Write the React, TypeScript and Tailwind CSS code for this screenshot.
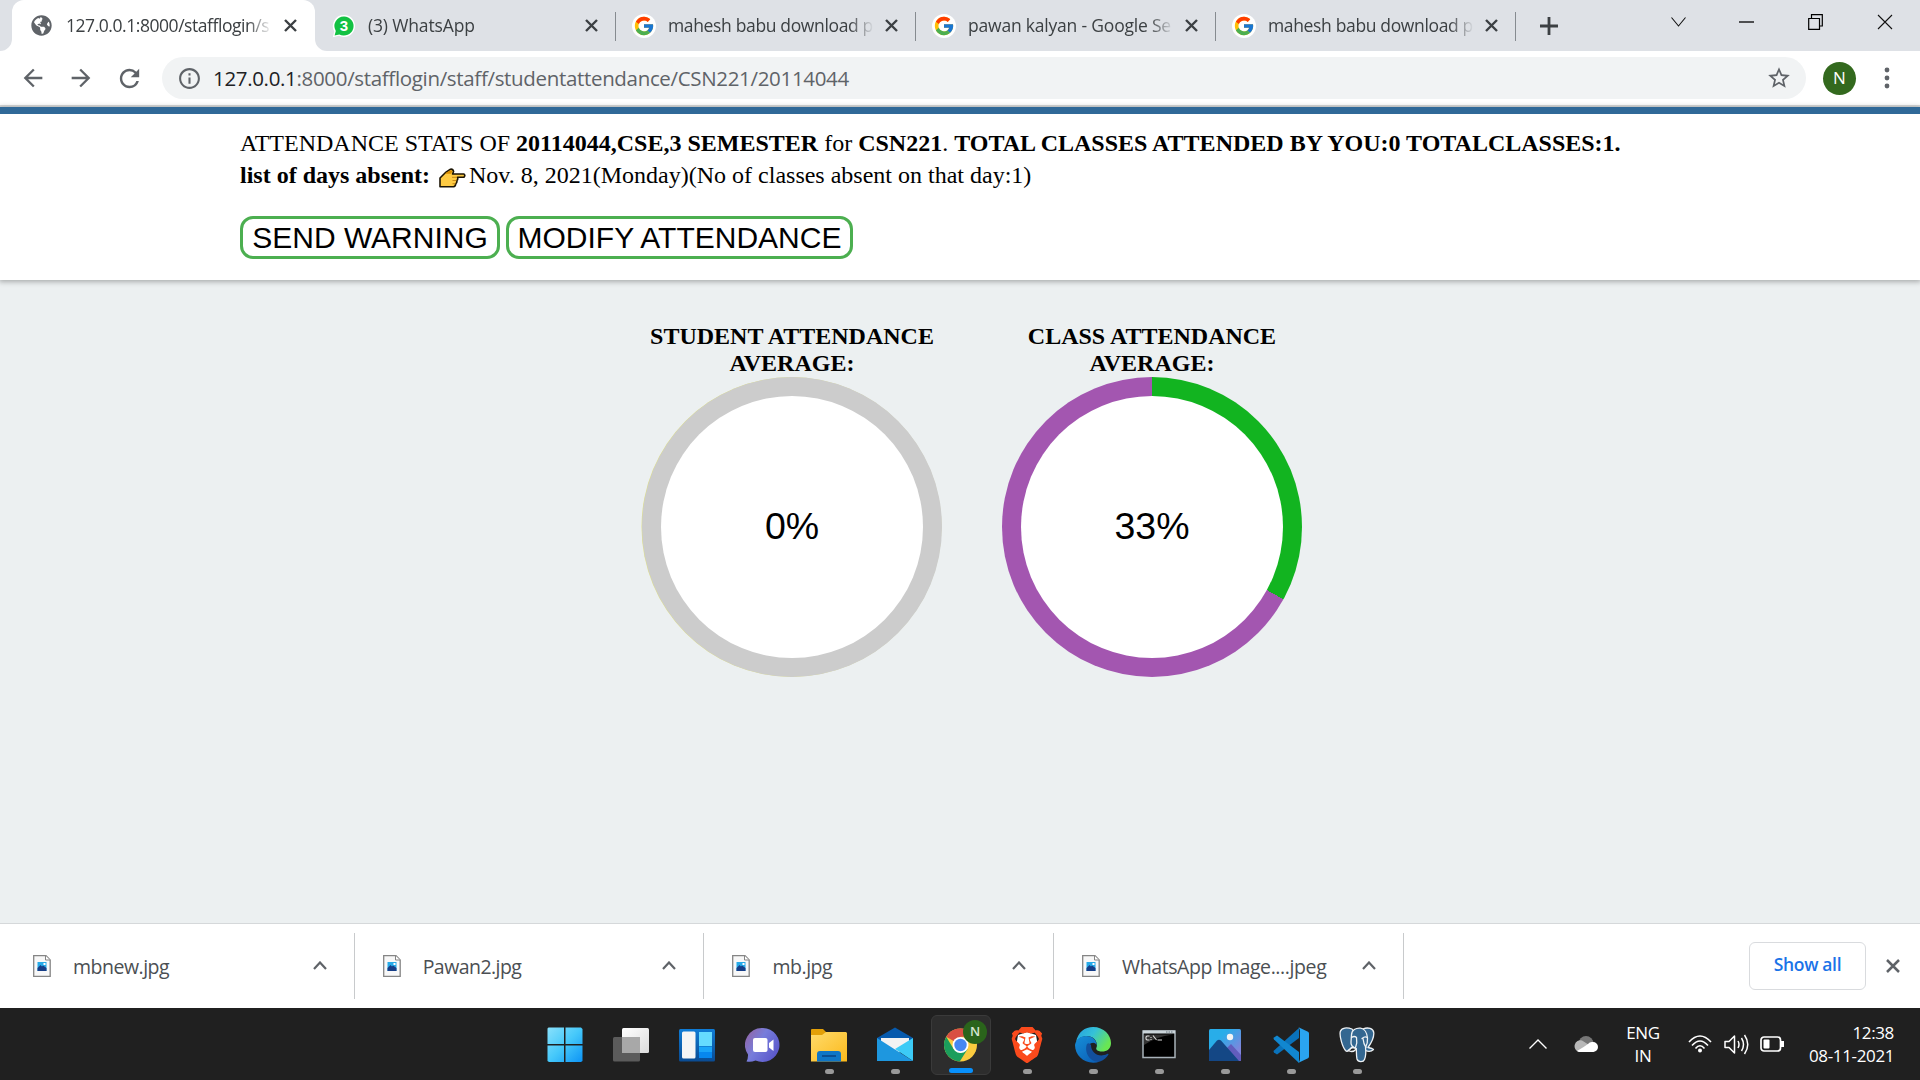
import React from "react";
import { FcGoogle } from "react-icons/fc";
import { SiBrave } from "react-icons/si";
import { FaGlobeAmericas } from "react-icons/fa";
import { MdStarBorder, MdRefresh, MdArrowBack, MdArrowForward, MdInfoOutline } from "react-icons/md";

const ui = "font-['Open_Sans','Noto_Sans',sans-serif]";

function Cross({ size, color, width = 2 }: { size: number; color: string; width?: number }) {
  return (
    <svg width={size} height={size} viewBox={`0 0 ${size} ${size}`} className="shrink-0">
      <path d={`M1 1L${size - 1} ${size - 1}M${size - 1} 1L1 ${size - 1}`} stroke={color} strokeWidth={width} fill="none" />
    </svg>
  );
}

function GoogleIcon() {
  return (
    <span className="flex h-6 w-6 items-center justify-center rounded-full bg-white">
      <FcGoogle size={22} />
    </span>
  );
}

function WhatsAppIcon() {
  return (
    <span className="relative flex h-6 w-6 items-center justify-center">
      <svg viewBox="0 0 24 24" className="absolute inset-0 h-6 w-6">
        <path d="M12 1a11 11 0 1 1-5 20.8L.8 23.2 2.3 17.500A11 11 0 0 1 12 1Z" fill="#fff" />
        <path d="M12 2.400a9.600 9.600 0 1 1-4.700 18L2.600 21.400 3.800 16.900A9.600 9.600 0 0 1 12 2.400Z" fill="#12c143" />
      </svg>
      <span className="relative font-['Liberation_Sans',sans-serif] text-[15px] font-bold leading-none text-white">3</span>
    </span>
  );
}

function Tab({ icon, title, tracking }: { icon: React.ReactNode; title: string; tracking: string }) {
  return (
    <div className="relative flex h-full w-[300px] shrink-0 items-center pl-[17px]">
      {icon}
      <span className={`ml-3 w-[206px] overflow-hidden whitespace-nowrap text-[17.5px] text-[#3c4043] [mask-image:linear-gradient(to_right,#000_88%,transparent)] ${tracking}`}>{title}</span>
      <span className="ml-[11px]"><Cross size={13} color="#3c4043" width={2.4} /></span>
      <span className="absolute right-[-1px] top-3 h-[29px] w-[1.5px] bg-[#868b90]" />
    </div>
  );
}

function TabStrip() {
  return (
    <div className="flex h-[51px] bg-[#dee1e6] pl-3">
      <div className="relative flex h-full w-[303px] shrink-0 items-center rounded-t-[12px] bg-white pl-[18px]">
        <svg className="absolute -left-3 bottom-0" width="12" height="12"><path d="M12 0V12H0A12 12 0 0 0 12 0Z" fill="#fff" /></svg>
        <svg className="absolute -right-3 bottom-0" width="12" height="12"><path d="M0 0V12H12A12 12 0 0 1 0 0Z" fill="#fff" /></svg>
        <FaGlobeAmericas size={21} color="#5f6368" className="mx-px" />
        <span className="ml-[13px] w-[206px] overflow-hidden whitespace-nowrap text-[17.5px] tracking-[-0.45px] text-[#3c4043] [mask-image:linear-gradient(to_right,#000_88%,transparent)]">127.0.0.1:8000/stafflogin/s</span>
        <span className="ml-[12px]"><Cross size={13} color="#3c4043" width={2.4} /></span>
      </div>
      <Tab icon={<WhatsAppIcon />} title="(3) WhatsApp" tracking="tracking-[-0.15px]" />
      <Tab icon={<GoogleIcon />} title="mahesh babu download p" tracking="tracking-[-0.35px]" />
      <Tab icon={<GoogleIcon />} title="pawan kalyan - Google Se" tracking="tracking-[-0.2px]" />
      <Tab icon={<GoogleIcon />} title="mahesh babu download p" tracking="tracking-[-0.35px]" />
      <svg width="18" height="18" className="ml-[25px] mt-[17px]"><path d="M9 0V18M0 9H18" stroke="#3c4043" strokeWidth="2.8" /></svg>
      <div className="ml-auto mr-[27px] mt-[13px] flex h-[17px] items-center">
        <svg width="15" height="10"><path d="M.5 .5L7.500 9L14.500 .5" stroke="#111" strokeWidth="1.100" fill="none" /></svg>
        <svg width="15" height="2" className="ml-[53px]"><path d="M0 1H15" stroke="#000" strokeWidth="1.300" /></svg>
        <svg width="15" height="16" className="ml-[54px]"><path d="M.7 4.500H11.500V15.300H.7ZM3.500 4.500V.7H14.300V12H11.500" stroke="#000" strokeWidth="1.200" fill="none" /></svg>
        <span className="ml-[54px]"><Cross size={16} color="#111" width={1.100} /></span>
      </div>
    </div>
  );
}

function Toolbar() {
  return (
    <div className="flex h-[56px] items-center border-b-2 border-[#dadcdc] bg-white pl-[19px] text-[#5f6368]">
      <MdArrowBack size={28} />
      <MdArrowForward size={28} className="ml-5" />
      <MdRefresh size={29} className="ml-5" />
      <div className="ml-[18px] flex h-[42px] w-[1644px] items-center rounded-full bg-[#f1f3f4] pl-[15px] pr-[14px]">
        <MdInfoOutline size={25} />
        <span className="ml-[11px] whitespace-nowrap text-[20.5px] tracking-[-0.33px] text-[#5f6368]"><span className="text-[#202124]">127.0.0.1</span>:8000/stafflogin/staff/studentattendance/CSN221/20114044</span>
        <MdStarBorder size={26} className="ml-auto" />
      </div>
      <span className="ml-[17px] flex h-[33px] w-[33px] items-center justify-center rounded-full bg-[#33691e] text-[17px] text-white">N</span>
      <svg width="6" height="22" className="ml-[28px]"><circle cx="3" cy="3" r="2.400" fill="#5f6368" /><circle cx="3" cy="11" r="2.400" fill="#5f6368" /><circle cx="3" cy="19" r="2.400" fill="#5f6368" /></svg>
    </div>
  );
}

function PointingHand() {
  return (
    <svg width="27" height="20" viewBox="0 0 27 20" className="absolute left-[199px] top-[9px]">
      <path d="M1 18.800V10L4.500 6.500 7 4.200 11.500 1.200Q14 .8 14.600 3.500L13.500 6H25Q26.600 7.500 25 9.300H18.500Q19.300 11.500 17.800 12.500 18.300 14.500 16.800 15.700 16.500 18.500 14.500 18.800Z" fill="#ffcb43" stroke="#1c1505" strokeWidth="1.600" strokeLinejoin="round" />
      <path d="M7.500 4.500L12 2 13.200 3.500 12 5.800H6Z" fill="#d98c00" />
      <path d="M13 9.300H18M13.500 12.500H17.500M13.500 15.700H16.500" stroke="#c98a16" strokeWidth="1" />
    </svg>
  );
}

function Ring({ title, value, className }: { title: string; value: string; className: string }) {
  return (
    <div className="flex w-[300px] flex-col items-center">
      <h2 className="text-center text-[24px] font-bold leading-[27px]">{title}<br />AVERAGE:</h2>
      <div className={`flex h-[300px] w-[300px] items-center justify-center rounded-full ${className}`}>
        <div className="flex h-[262px] w-[262px] items-center justify-center rounded-full bg-white pb-px font-['Liberation_Sans',sans-serif] text-[37.5px]">{value}</div>
      </div>
    </div>
  );
}

function Page() {
  return (
    <main className="h-[816px] bg-[#ecf0f1] font-['Liberation_Serif',serif] text-black">
      <div className="h-[173px] border-t-[7px] border-[#306998] bg-white pl-60 pt-[13px] shadow-[0_1px_5px_1px_rgba(0,0,0,0.28)]">
        <p className="whitespace-nowrap text-[24px] leading-8">ATTENDANCE STATS OF <b>20114044,CSE,3 SEMESTER</b> for <b>CSN221</b>. <b>TOTAL CLASSES ATTENDED BY YOU:0 TOTALCLASSES:1.</b></p>
        <div className="relative flex whitespace-nowrap text-[24px] leading-8">
          <b className="w-[229px]">list of days absent:</b>
          <PointingHand />
          <span>Nov. 8, 2021(Monday)(No of classes absent on that day:1)</span>
        </div>
        <div className="mt-[25px] flex gap-[6px] font-['Liberation_Sans',sans-serif] text-[30px]">
          <button className="flex h-[43px] w-[260px] items-center justify-center whitespace-nowrap rounded-[13px] border-[3px] border-[#4caf50] pb-px">SEND WARNING</button>
          <button className="flex h-[43px] w-[347px] items-center justify-center whitespace-nowrap rounded-[13px] border-[3px] border-[#4caf50] pb-px">MODIFY ATTENDANCE</button>
        </div>
      </div>
      <div className="flex gap-[60px] pl-[642px] pt-[43px]">
        <Ring title="STUDENT ATTENDANCE" value="0%" className="bg-[#ccc] shadow-[-0.5px_0_0_0_#dfe08a]" />
        <Ring title="CLASS ATTENDANCE" value="33%" className="bg-[conic-gradient(#12b420_0_33%,#a356b0_33%)]" />
      </div>
    </main>
  );
}

function ShelfItem({ name, tracking }: { name: string; tracking: string }) {
  return (
    <div className="flex h-[66px] w-[349.700px] items-center border-r-[1.500px] border-[#c8cacc] pl-7">
      <svg width="18" height="22" viewBox="0 0 18 22" className="-mt-px">
        <path d="M.7 .7H13L17.200 5V21.300H.7Z" fill="#f8f8f8" stroke="#858585" strokeWidth="1.300" />
        <path d="M12.500 .7V5H17" fill="#fff" stroke="#858585" />
        <path d="M4.500 7H13.500V16H4.500Z" fill="#27aae8" />
        <path d="M4.500 13L7.500 10 9 11.500 10 10.500 13.500 13V16H4.500Z" fill="#173d86" />
        <rect x="10.500" y="8" width="2" height="2" fill="#fff" />
      </svg>
      <span className={`ml-[22px] mt-[2px] whitespace-nowrap text-[19.500px] text-[#4b4f53] ${tracking}`}>{name}</span>
      <svg width="14" height="9" className="-mt-px ml-auto mr-[27px]"><path d="M1 8L7 1.500L13 8" stroke="#5f6368" strokeWidth="2.200" fill="none" /></svg>
    </div>
  );
}

function DownloadShelf() {
  return (
    <div className="flex h-[85px] items-center border-t border-[#d5d8da] bg-white pl-[5px]">
      <ShelfItem name="mbnew.jpg" tracking="tracking-[-0.5px]" />
      <ShelfItem name="Pawan2.jpg" tracking="tracking-[-0.55px]" />
      <ShelfItem name="mb.jpg" tracking="tracking-[-0.45px]" />
      <ShelfItem name="WhatsApp Image....jpeg" tracking="tracking-[-0.4px]" />
      <button className="-mt-px ml-auto flex h-12 w-[117px] items-center justify-center rounded-[6px] border border-[#d9dbde] pb-[2px] text-[17.500px] font-semibold tracking-[-0.35px] text-[#1a73e8]">Show all</button>
      <span className="-mt-px ml-[20px] mr-[20px]"><Cross size={14} color="#5f6368" width={2.500} /></span>
    </div>
  );
}

const taskIcons: { draw: React.ReactNode; running: boolean; active?: boolean }[] = [
  { running: false, draw: (
    <svg width="36" height="36" viewBox="0 0 36 36">
      <defs><linearGradient id="win" gradientUnits="userSpaceOnUse" x1="0" y1="0" x2="36" y2="36"><stop stopColor="#8be2fc" /><stop offset=".5" stopColor="#45c8fa" /><stop offset="1" stopColor="#0a91f5" /></linearGradient></defs>
      <path d="M1.500 .5H17V17H.5V1.500ZM18.500 .5H34L35.500 2V17H18.500ZM.5 18.500H17V35H2L.5 34ZM18.500 18.500H35.500V34L34 35H18.500Z" fill="url(#win)" />
    </svg>) },
  { running: false, draw: (
    <svg width="36" height="36" viewBox="0 0 36 36">
      <defs><linearGradient id="tv" x1="0" y1="0" x2="1" y2="1"><stop stopColor="#fff" /><stop offset="1" stopColor="#dcdcdc" /></linearGradient></defs>
      <rect x="9" y="1" width="27" height="25" rx="1.500" fill="url(#tv)" /><rect y="10" width="27" height="24.500" rx="1.500" fill="#5b5b5b" /><path d="M9 10H27V26H9Z" fill="#a8a8a8" />
    </svg>) },
  { running: false, draw: (
    <svg width="36" height="36" viewBox="0 0 36 36">
      <defs><linearGradient id="wd" x1="0" y1="0" x2="0" y2="1"><stop stopColor="#0f7cd6" /><stop offset="1" stopColor="#0a4b92" /></linearGradient></defs>
      <rect y="2" width="36" height="32.500" rx="1.500" fill="url(#wd)" /><rect x="3" y="4.500" width="13.500" height="27" rx="1.500" fill="#f5f5f5" /><path d="M20 5H33V19H20Z" fill="#66dbff" /><path d="M20 19.500H33V25H20Z" fill="#1aa4f8" /><path d="M20 25H33V31H20Z" fill="#0787ee" />
    </svg>) },
  { running: false, draw: (
    <svg width="36" height="36" viewBox="0 0 36 36">
      <defs><linearGradient id="ch" x1="0" y1="0.200" x2="1" y2="0.800"><stop stopColor="#9166a8" /><stop offset=".4" stopColor="#777ddb" /><stop offset="1" stopColor="#5753c9" /></linearGradient></defs>
      <path d="M18 1A17 17 0 1 1 10.500 33.500Q6 35.500 1.500 34.500 3.200 31.500 3 27.500A17 17 0 0 1 18 1Z" fill="url(#ch)" /><rect x="8" y="11" width="14.500" height="14" rx="2" fill="#fff" /><path d="M24 16L28.500 12.500V24L24 20.500Z" fill="#fff" />
    </svg>) },
  { running: true, draw: (
    <svg width="36" height="36" viewBox="0 0 36 36">
      <defs><linearGradient id="fe" x1="0" y1="0" x2="1" y2="1"><stop stopColor="#ffdb6b" /><stop offset="1" stopColor="#fbb91b" /></linearGradient></defs>
      <path d="M0 3Q0 2 1 2H12L15 5V10H0Z" fill="#e3a008" /><path d="M0 8H11L15 5H35L36 6V34.500H0Z" fill="url(#fe)" /><path d="M6 34.500V27Q6 24 9 24H27Q30 24 30 27V34.500Z" fill="#0f76c6" /><path d="M11 29H25" stroke="#0a4f93" strokeWidth="2" />
    </svg>) },
  { running: true, draw: (
    <svg width="36" height="36" viewBox="0 0 36 36">
      <path d="M0 11L18 .5 36 11V20H0Z" fill="#075aad" /><path d="M4 11H32V20L18 28 4 20Z" fill="#f3f3f3" /><path d="M36 11L18 22 36 34Z" fill="#3ccbf6" /><path d="M0 11L36 34H0Z" fill="#1e97df" />
    </svg>) },
  { running: true, active: true, draw: (
    <svg width="36" height="36" viewBox="0 0 36 36">
      <circle cx="17.500" cy="18" r="16.500" fill="#fbcb3f" /><path d="M17.500 18L3.200 9.700A16.500 16.500 0 0 1 31.800 9.700H17.500Z" fill="#d94f43" /><path d="M3.200 9.700L10.600 22 17.500 26L24.600 22 16.800 34.500A16.500 16.500 0 0 1 3.200 9.700Z" fill="#1b9e5c" /><circle cx="17.500" cy="18" r="8" fill="#fff" /><circle cx="17.500" cy="18" r="6.200" fill="#4587f3" />
    </svg>) },
  { running: true, draw: (
    <span className="relative flex h-9 w-9 items-center justify-center"><svg viewBox="0 0 36 36" className="absolute inset-0"><path d="M9 8L18 5 27 8 29 20 18 30 7 20Z" fill="#fff" /></svg><SiBrave size={36} color="#fb4a1c" className="relative" /></span>) },
  { running: true, draw: (
    <svg width="36" height="36" viewBox="0 0 36 36">
      <defs><linearGradient id="eg" x1="0" y1="0" x2="1" y2=".5"><stop stopColor="#249ee0" /><stop offset=".5" stopColor="#35c1d8" /><stop offset="1" stopColor="#69e653" /></linearGradient><linearGradient id="eb" x1="0" y1="0" x2=".7" y2="1"><stop stopColor="#168ed8" /><stop offset="1" stopColor="#0c63b9" /></linearGradient></defs>
      <path d="M1 15C3 5 10 0 18 0C29 0 36 8 36 16C36 22 32 24.500 27 24.500C22 24.500 20.500 22 21.500 20.500C23 18 21 9 12 9C6 9 2 13 1 15Z" fill="url(#eg)" />
      <path d="M0 18C1 12 6 9 11 9C18 9 22 14 21.500 18C19 13 12 17 12 23C12 30 20 34 25 34.500C12 39 0 30 0 18Z" fill="url(#eb)" />
      <path d="M12 17C9 24 14 36 25 34.500C29 33 32 30 33.500 27.500C33.500 26.500 33 26.500 32 27C24 31 16 26 16 18Q14 15 12 17Z" fill="#124f9c" />
    </svg>) },
  { running: true, draw: (
    <svg width="36" height="36" viewBox="0 0 36 36">
      <rect x="2" y="4" width="32" height="26.500" fill="#000" stroke="#a8b2b9" strokeWidth="1.500" /><path d="M2 3.500H34V6.500H2Z" fill="#cbd5da" /><path d="M3 7.500H32Q14 10 3 18Z" fill="#333" /><path d="M25 5H32" stroke="#65727a" strokeDasharray="1.500 1" /><path d="M8.500 9H6L5 10V12L6 13H8.500M10 10V11M10 12V13M12 8.500L15.500 13M16.500 13H21" stroke="#d9d9d9" strokeWidth="1.100" fill="none" />
    </svg>) },
  { running: true, draw: (
    <svg width="36" height="36" viewBox="0 0 36 36">
      <defs><linearGradient id="ph" x1="0" y1="0" x2="1" y2="1"><stop offset=".3" stopColor="#28ade9" /><stop offset=".8" stopColor="#8185dc" /></linearGradient></defs>
      <rect x="2" y="2" width="32" height="32" rx="1.500" fill="url(#ph)" /><path d="M19 22L24 17 34 28V34H20Z" fill="#625dbd" /><path d="M2 23L10 13.500Q12 12 14 13.500L32 34H2Z" fill="#144785" /><circle cx="23" cy="10" r="3.200" fill="#f4f4f4" />
    </svg>) },
  { running: true, draw: (
    <svg width="36" height="36" viewBox="0 0 36 36">
      <path d="M1 23.500Q0 24.500 1 25.500L4 27.500 26 11V1Z" fill="#0a72ba" /><path d="M1 12.500Q0 11.500 1 10.500L4 8.500 26 25V36Z" fill="#1187d0" /><path d="M25.500 .2L35 4.800Q36 5.200 36 6.500V29.500Q36 30.800 35 31.200L25.500 35.800Q27 34 27 32V4Q27 2 25.500 .2Z" fill="#2aa4f0" />
    </svg>) },
  { running: true, draw: (
    <svg width="36" height="36" viewBox="0 0 36 36" fill="#336791" stroke="#eef2f5" strokeWidth="1.300" strokeLinejoin="round" strokeLinecap="round">
      <path d="M24 2C29 -.2 34.500 1.500 34.800 6C35 11 31.500 17 29 20.500L33 21.500Q34.500 22 34.500 22.500C32.500 24.500 29 24.500 26.500 23.500Z" />
      <path d="M13 2C8 .2 2.500 .5 1.300 4.500C.2 9 3.500 20 6.500 23.500C8.500 25.500 10.500 23 12.500 20.500L17 21V8Z" />
      <path d="M12.500 8C12.500 3 17 .8 21.500 1.200C25.500 1.500 28 6 28.500 11C28.800 15 28 18 26.500 20.500C27.200 26 26.500 30 25.500 32.500C24.500 35.200 19 35.500 18 32C17.200 28.500 17.500 25 17.300 21.500C14.500 20.500 11.500 18.500 12 15Z" />
      <path d="M12.500 10.500Q15.500 8.500 17.500 10.500Q18.500 16 16.500 20.500M12.500 21Q10.500 22 9 23.500Q14 26 17.300 22M23 11.500Q26 9 28.300 10.500M24 11.500Q24.500 17 27 20.500" fill="none" />
    </svg>) },
];

function Taskbar() {
  return (
    <div className="relative flex h-[72px] items-center bg-[#202020] text-white">
      <div className="flex h-[60px] items-center gap-[6px] pl-[535px] pt-[2px]">
        {taskIcons.map((t, i) => (
          <div key={i} className={`relative flex h-[60px] w-[60px] items-center justify-center rounded-[6px] ${t.active ? "border border-[#3a3a3a] bg-[#2d2d2d]" : ""}`}>
            {t.draw}
            {t.active && <span className="absolute right-[3px] top-1 flex h-6 w-6 items-center justify-center rounded-full bg-[#2a641b] text-[13px] font-semibold text-[#d5e5d0]">N</span>}
            {t.running && <span className={`absolute bottom-[1px] h-[5px] rounded-full ${t.active ? "w-6 bg-[#0890fb]" : "w-[9px] bg-[#999]"}`} />}
          </div>
        ))}
      </div>
      <div className="ml-auto flex items-center pr-[26px] text-[17px] leading-[23px]">
        <svg width="18" height="10"><path d="M.5 9.500L9 1L17.500 9.500" stroke="#fff" strokeWidth="1.400" fill="none" /></svg>
        <svg width="24" height="16" className="ml-[27px]"><circle cx="12" cy="7.500" r="7.500" fill="#777" /><path d="M5 16A5 5 0 1 1 8 4.500L20 12V16Z" fill="#b8b8b8" /><path d="M3 15Q10 11 14 8A5 5 0 0 1 19 6A5 5 0 0 1 19 16H5Z" fill="#fff" /></svg>
        <div className="ml-[27px] w-[36px] text-center tracking-[-0.3px]">ENG<br />IN</div>
        <svg width="24" height="18" className="ml-[27px]" fill="none" stroke="#fff" strokeWidth="1.600"><path d="M1 7Q12-5 23 7M4 10.500Q12 1.500 20 10.500M7.500 13.500Q12 8 16.500 13.500" /><circle cx="12" cy="15.500" r="2" fill="#fff" stroke="none" /></svg>
        <svg width="25" height="21" className="ml-3" fill="none" stroke="#fff" strokeWidth="1.500"><path d="M1 7.500H5L10.500 2V19L5 13.500H1ZM14 7Q16 10.500 14 14M17.500 4Q21.500 10.500 17.500 17M20.500 1Q27 10.500 20.500 20" strokeLinejoin="round" /></svg>
        <svg width="25" height="16" className="ml-[11px]" fill="none" stroke="#fff" strokeWidth="1.700"><rect x="1" y="1" width="19.500" height="14" rx="3" /><rect x="3.500" y="3.500" width="6" height="9" rx="1" fill="#fff" stroke="none" /><path d="M22.500 5V11" strokeWidth="3" /></svg>
        <div className="ml-[24px] w-[85px] whitespace-nowrap text-right tracking-[-0.35px]">12:38<br />08-11-2021</div>
      </div>
    </div>
  );
}

export default function App() {
  return (
    <div className={`flex h-[1080px] w-[1920px] flex-col overflow-hidden bg-white ${ui}`}>
      <TabStrip />
      <Toolbar />
      <Page />
      <DownloadShelf />
      <Taskbar />
    </div>
  );
}
